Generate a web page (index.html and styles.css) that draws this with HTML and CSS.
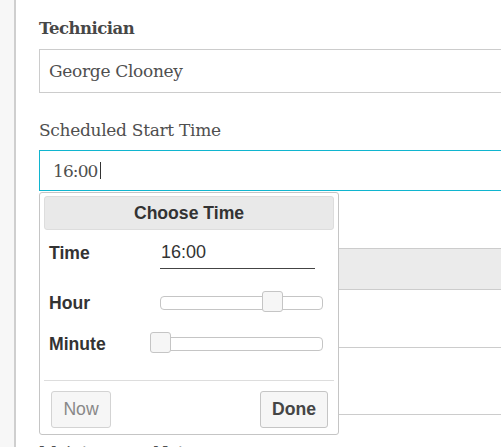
FILE: index.html
```html
<!DOCTYPE html>
<html>
<head>
<meta charset="utf-8">
<link rel="stylesheet" href="styles.css">
</head>
<body>
<div class="page">
  <aside class="rail"></aside>
  <main class="main">
    <div class="field">
      <label class="label label-bold">Technician</label>
      <div class="control c1">George Clooney</div>
    </div>
    <div class="field">
      <label class="label">Scheduled Start Time</label>
      <div class="control c2">16:00<span class="caret"></span></div>
    </div>
    <div class="field">
      <label class="label">Scheduled End Time</label>
      <div class="control c3"></div>
    </div>
    <div class="field">
      <label class="label">Status</label>
      <div class="control c4"></div>
    </div>
    <div class="field">
      <label class="label">Maintenance Notes</label>
      <div class="control c4"></div>
    </div>

    <div class="picker">
      <div class="pk-header">Choose Time</div>
      <div class="pk-body">
        <div class="pk-row pk-row-time">
          <span class="pk-label">Time</span>
          <div class="pk-time">16:00</div>
        </div>
        <div class="pk-row pk-row-hour">
          <span class="pk-label">Hour</span>
          <div class="pk-slider"><span class="pk-thumb" style="left: 69.57%"></span></div>
        </div>
        <div class="pk-row pk-row-minute">
          <span class="pk-label">Minute</span>
          <div class="pk-slider"><span class="pk-thumb" style="left: 0%"></span></div>
        </div>
      </div>
      <div class="pk-buttons">
        <button class="pk-btn pk-now">Now</button>
        <button class="pk-btn pk-done">Done</button>
      </div>
    </div>
  </main>
</div>
</body>
</html>
```

FILE: styles.css
```css
html, body {
  margin: 0;
  padding: 0;
  background: #ffffff;
  overflow: hidden;
  height: 447px;
}

.page {
  display: flex;
  height: 447px;
  width: 501px;
  overflow: hidden;
}

.rail {
  width: 14px;
  flex: 0 0 14px;
  background: #f7f7f7;
  border-right: 2px solid #cfcfcf;
}

.main {
  position: relative;
  flex: 1 1 auto;
  padding: 15px 0 0 23px;
  font-family: "DejaVu Serif", "Liberation Serif", serif;
  color: #4f4f4f;
  overflow: hidden;
}

.field {
  margin-bottom: 23px;
}

.label {
  display: block;
  font-size: 17px;
  letter-spacing: -0.3px;
  line-height: 24px;
  padding-top: 2px;
  margin-bottom: 8px;
  white-space: nowrap;
}

.label-bold {
  font-weight: bold;
  font-size: 16.5px;
  letter-spacing: -0.5px;
  color: #474747;
}

.control {
  box-sizing: border-box;
  width: 600px;
  border: 1px solid #cccccc;
  background: #ffffff;
  font-size: 17px;
  letter-spacing: -0.3px;
  display: flex;
  align-items: center;
  white-space: nowrap;
}

.c1 {
  height: 44px;
  padding-left: 9px;
}

.c2 {
  height: 41px;
  padding-left: 13px;
  border-color: #10b5cf;
  letter-spacing: -0.9px;
}

.caret {
  display: inline-block;
  width: 1px;
  height: 17px;
  background: #333333;
  margin-left: 2px;
}

.c3 {
  height: 42px;
  background: #ebebeb;
}

.c4 {
  height: 68px;
}

/* time picker */
.picker {
  position: absolute;
  left: 23px;
  top: 192px;
  box-sizing: border-box;
  width: 300px;
  padding: 3px 4px;
  border: 1px solid #c5c5c5;
  border-radius: 3px;
  background: #ffffff;
  font-family: "Liberation Sans", Arial, sans-serif;
  color: #333333;
  letter-spacing: 0;
}

.pk-header {
  box-sizing: border-box;
  height: 34px;
  border: 1px solid #dddddd;
  border-radius: 3px;
  background: #e9e9e9;
  font-weight: bold;
  font-size: 17.6px;
  display: flex;
  align-items: center;
  justify-content: center;
}

.pk-body {
  padding: 6px 0 19px 5px;
  border-bottom: 1px solid #dddddd;
}

.pk-row {
  display: flex;
  align-items: center;
  height: 34px;
}

.pk-row-hour {
  margin-top: 16px;
}

.pk-row-minute {
  margin-top: 7px;
}

.pk-label {
  width: 111px;
  flex: 0 0 111px;
  font-weight: bold;
  font-size: 17.6px;
}

.pk-time {
  box-sizing: border-box;
  width: 155px;
  height: 31px;
  padding-left: 1px;
  border-bottom: 1px solid #444444;
  font-size: 18px;
  display: flex;
  align-items: center;
}

.pk-slider {
  position: relative;
  box-sizing: border-box;
  width: 163px;
  height: 14px;
  border: 1px solid #c5c5c5;
  border-radius: 4px;
  background: #ffffff;
}

.pk-thumb {
  position: absolute;
  top: -6px;
  margin-left: -11px;
  box-sizing: border-box;
  width: 21px;
  height: 21px;
  border: 1px solid #c5c5c5;
  border-radius: 3px;
  background: #f6f6f6;
}

.pk-buttons {
  display: flex;
  justify-content: space-between;
  padding: 10px 6px 3px 7px;
}

.pk-btn {
  box-sizing: border-box;
  height: 37px;
  margin: 0;
  border: 1px solid #c5c5c5;
  border-radius: 3px;
  background: #f6f6f6;
  font-family: "Liberation Sans", Arial, sans-serif;
  font-size: 17.6px;
  padding: 0;
}

.pk-now {
  width: 60px;
  color: #888888;
  border-color: #d3d3d3;
}

.pk-done {
  width: 68px;
  color: #454545;
  font-weight: bold;
}
```
